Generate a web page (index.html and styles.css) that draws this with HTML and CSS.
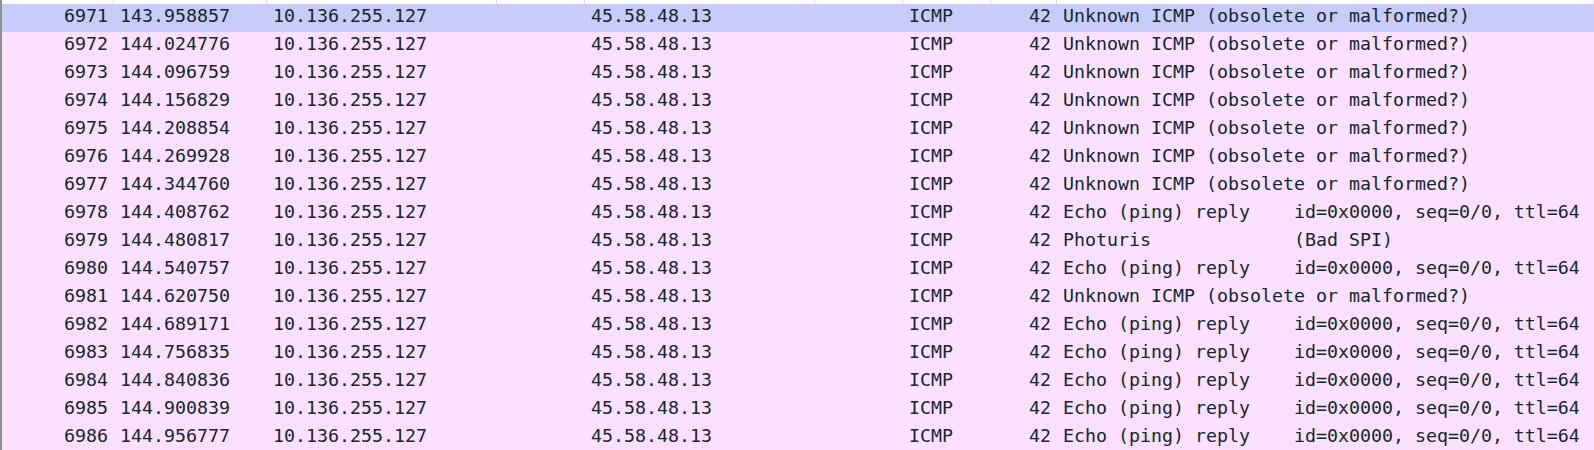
FILE: index.html
```html
<!DOCTYPE html>
<html>
<head>
<meta charset="utf-8">
<link rel="stylesheet" href="styles.css">
</head>
<body>
<div class="packets">
  <div class="head">
    <div></div><div></div><div></div><div></div><div></div><div></div><div></div><div></div><div></div>
  </div>
  <div class="row sel"><span class="num">6971</span><span>143.958857</span><span>10.136.255.127</span><span></span><span>45.58.48.13</span><span></span><span>ICMP</span><span class="num">42</span><span>Unknown ICMP (obsolete or malformed?)</span></div>
  <div class="row"><span class="num">6972</span><span>144.024776</span><span>10.136.255.127</span><span></span><span>45.58.48.13</span><span></span><span>ICMP</span><span class="num">42</span><span>Unknown ICMP (obsolete or malformed?)</span></div>
  <div class="row"><span class="num">6973</span><span>144.096759</span><span>10.136.255.127</span><span></span><span>45.58.48.13</span><span></span><span>ICMP</span><span class="num">42</span><span>Unknown ICMP (obsolete or malformed?)</span></div>
  <div class="row"><span class="num">6974</span><span>144.156829</span><span>10.136.255.127</span><span></span><span>45.58.48.13</span><span></span><span>ICMP</span><span class="num">42</span><span>Unknown ICMP (obsolete or malformed?)</span></div>
  <div class="row"><span class="num">6975</span><span>144.208854</span><span>10.136.255.127</span><span></span><span>45.58.48.13</span><span></span><span>ICMP</span><span class="num">42</span><span>Unknown ICMP (obsolete or malformed?)</span></div>
  <div class="row"><span class="num">6976</span><span>144.269928</span><span>10.136.255.127</span><span></span><span>45.58.48.13</span><span></span><span>ICMP</span><span class="num">42</span><span>Unknown ICMP (obsolete or malformed?)</span></div>
  <div class="row"><span class="num">6977</span><span>144.344760</span><span>10.136.255.127</span><span></span><span>45.58.48.13</span><span></span><span>ICMP</span><span class="num">42</span><span>Unknown ICMP (obsolete or malformed?)</span></div>
  <div class="row"><span class="num">6978</span><span>144.408762</span><span>10.136.255.127</span><span></span><span>45.58.48.13</span><span></span><span>ICMP</span><span class="num">42</span><span>Echo (ping) reply    id=0x0000, seq=0/0, ttl=64</span></div>
  <div class="row"><span class="num">6979</span><span>144.480817</span><span>10.136.255.127</span><span></span><span>45.58.48.13</span><span></span><span>ICMP</span><span class="num">42</span><span>Photuris             (Bad SPI)</span></div>
  <div class="row"><span class="num">6980</span><span>144.540757</span><span>10.136.255.127</span><span></span><span>45.58.48.13</span><span></span><span>ICMP</span><span class="num">42</span><span>Echo (ping) reply    id=0x0000, seq=0/0, ttl=64</span></div>
  <div class="row"><span class="num">6981</span><span>144.620750</span><span>10.136.255.127</span><span></span><span>45.58.48.13</span><span></span><span>ICMP</span><span class="num">42</span><span>Unknown ICMP (obsolete or malformed?)</span></div>
  <div class="row"><span class="num">6982</span><span>144.689171</span><span>10.136.255.127</span><span></span><span>45.58.48.13</span><span></span><span>ICMP</span><span class="num">42</span><span>Echo (ping) reply    id=0x0000, seq=0/0, ttl=64</span></div>
  <div class="row"><span class="num">6983</span><span>144.756835</span><span>10.136.255.127</span><span></span><span>45.58.48.13</span><span></span><span>ICMP</span><span class="num">42</span><span>Echo (ping) reply    id=0x0000, seq=0/0, ttl=64</span></div>
  <div class="row"><span class="num">6984</span><span>144.840836</span><span>10.136.255.127</span><span></span><span>45.58.48.13</span><span></span><span>ICMP</span><span class="num">42</span><span>Echo (ping) reply    id=0x0000, seq=0/0, ttl=64</span></div>
  <div class="row"><span class="num">6985</span><span>144.900839</span><span>10.136.255.127</span><span></span><span>45.58.48.13</span><span></span><span>ICMP</span><span class="num">42</span><span>Echo (ping) reply    id=0x0000, seq=0/0, ttl=64</span></div>
  <div class="row"><span class="num">6986</span><span>144.956777</span><span>10.136.255.127</span><span></span><span>45.58.48.13</span><span></span><span>ICMP</span><span class="num">42</span><span>Echo (ping) reply    id=0x0000, seq=0/0, ttl=64</span></div>
</div>
</body>
</html>
```

FILE: styles.css
```css
html, body {
  margin: 0;
  padding: 0;
  background: #ffffff;
  overflow: hidden;
}

.packets {
  height: 450px;
  overflow: hidden;
  border-left: 2px solid #8e8e8e;
  font-family: "DejaVu Sans Mono", "Liberation Mono", monospace;
  font-size: 18.27px;
  color: #12272e;
}

.head,
.row {
  display: grid;
  grid-template-columns: 112px 153px 230px 88px 230px 88px 88px 66px 1fr;
}

.head {
  height: 4px;
  background: #ffffff;
}

.head > div {
  border-right: 1px solid #dedede;
}

.row {
  height: 28px;
  line-height: 24px;
  background: #fce0ff;
  white-space: pre;
}

.row.sel {
  background: #c8ccfa;
}

.row > span {
  padding: 0 6px;
  overflow: hidden;
}

.row > span.num {
  text-align: right;
}
```
